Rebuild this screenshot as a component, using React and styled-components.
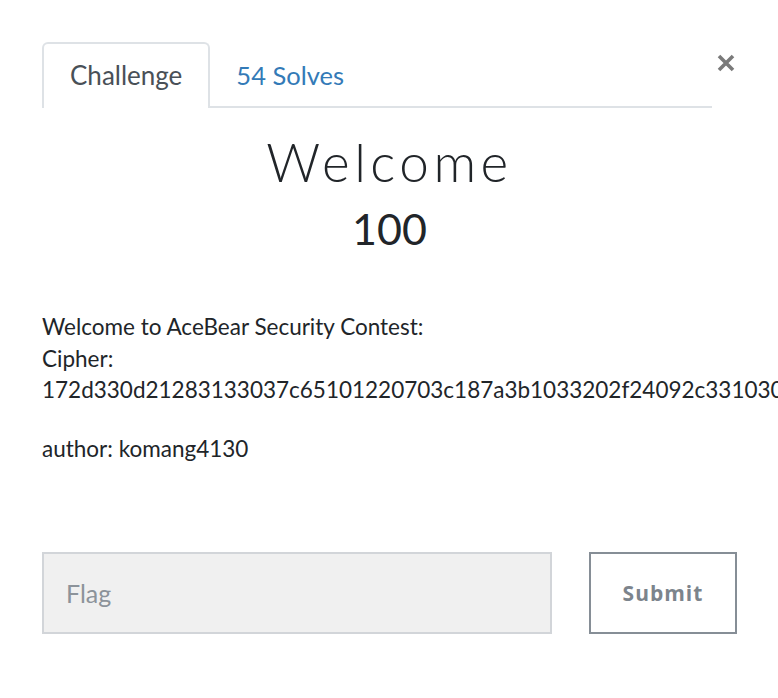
import styled, { createGlobalStyle } from "styled-components";

const GlobalStyle = createGlobalStyle`
  html, body {
    margin: 0;
    padding: 0;
    background: #fff;
    overflow: hidden;
  }
  body {
    font-family: Lato, "Open Sans", sans-serif;
    color: #212529;
  }
`;

const Modal = styled.div`
  width: 695px;
  padding: 42px 0 0 42px;
`;

const Header = styled.div`
  display: flex;
  align-items: flex-start;
`;

const Tabs = styled.div`
  display: flex;
  width: 672px;
  border-bottom: 2px solid #dee2e6;
`;

const Tab = styled.div`
  height: 62px;
  padding: 0 ${({ $active }) => ($active ? "26px" : "24px")} 2px;
  display: flex;
  align-items: center;
  font-size: ${({ $active }) => ($active ? "26px" : "25.5px")};
  color: ${({ $active }) => ($active ? "#495057" : "#337ab7")};
  border: 2px solid ${({ $active }) => ($active ? "#dee2e6" : "transparent")};
  border-bottom: none;
  border-radius: 6px 6px 0 0;
  margin-bottom: -2px;
  background: ${({ $active }) => ($active ? "#fff" : "transparent")};
`;

const Close = styled.div`
  margin: 10px 0 0 3px;
  width: 22px;
  height: 22px;
  display: flex;
  align-items: center;
  justify-content: center;
`;

const Title = styled.h1`
  margin: 24px 0 0;
  width: 695px;
  text-align: center;
  font-family: Lato, sans-serif;
  font-weight: 300;
  font-size: 53px;
  letter-spacing: 4.5px;
  line-height: 60px;
  color: #212529;
`;

const Points = styled.div`
  width: 695px;
  text-align: center;
  font-size: 43px;
  line-height: 50px;
  margin-top: 12px;
  color: #212529;
`;

const Description = styled.div`
  margin-top: 57px;
  font-size: 22.5px;
  line-height: 31.5px;
  white-space: nowrap;
`;

const Para = styled.p`
  margin: 0 0 27px;
`;

const Form = styled.div`
  display: flex;
  gap: 37px;
  margin-top: 88px;
`;

const FlagInput = styled.input`
  box-sizing: border-box;
  width: 510px;
  height: 82px;
  background: #f0f0f0;
  border: 2px solid #d2d5d9;
  padding: 0 22px;
  font-family: Lato, sans-serif;
  font-size: 25px;
  color: #495057;
  outline: none;
  &::placeholder {
    color: #8c939a;
  }
`;

const SubmitButton = styled.button`
  box-sizing: border-box;
  width: 148px;
  height: 82px;
  background: #fff;
  border: 2px solid #868e96;
  font-family: "Open Sans", Lato, sans-serif;
  font-weight: 700;
  font-size: 21px;
  letter-spacing: 1px;
  color: #7c848c;
  padding: 0;
`;

export default function App() {
  return (
    <>
      <GlobalStyle />
      <Modal>
        <Header>
          <Tabs>
            <Tab $active>Challenge</Tab>
            <Tab>54 Solves</Tab>
          </Tabs>
          <Close>
            <svg width="18" height="18" viewBox="0 0 18 18">
              <path d="M2 2L16 16M16 2L2 16" stroke="#7a7a7a" strokeWidth="3.6" />
            </svg>
          </Close>
        </Header>
        <Title>Welcome</Title>
        <Points>100</Points>
        <Description>
          <Para>
            Welcome to AceBear Security Contest:
            <br />
            Cipher:
            <br />
            172d330d21283133037c65101220703c187a3b1033202f24092c331030
          </Para>
          <Para>author: komang4130</Para>
        </Description>
        <Form>
          <FlagInput placeholder="Flag" />
          <SubmitButton>Submit</SubmitButton>
        </Form>
      </Modal>
    </>
  );
}
